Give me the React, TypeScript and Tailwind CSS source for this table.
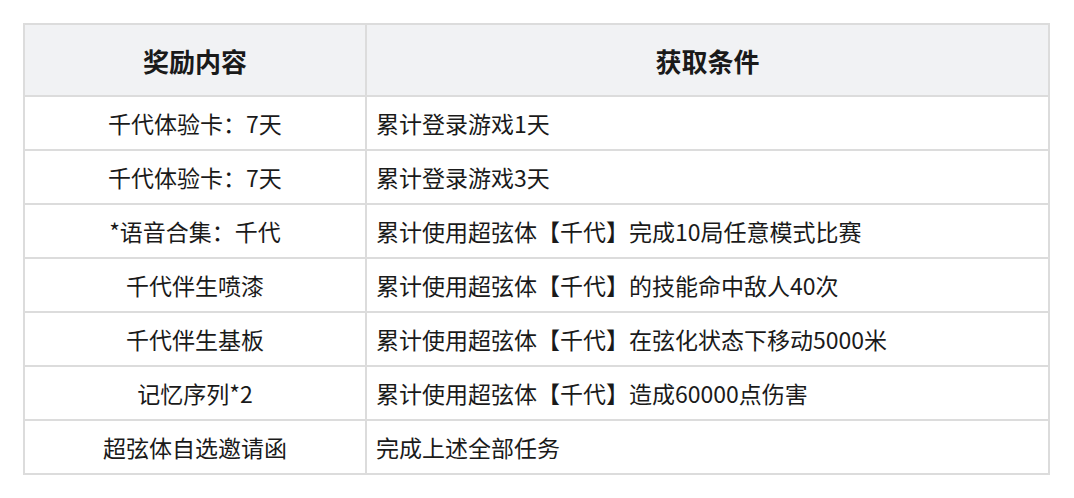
export default function App() {
  const rows: [string, string][] = [
    ["千代体验卡：7天", "累计登录游戏1天"],
    ["千代体验卡：7天", "累计登录游戏3天"],
    ["*语音合集：千代", "累计使用超弦体【千代】完成10局任意模式比赛"],
    ["千代伴生喷漆", "累计使用超弦体【千代】的技能命中敌人40次"],
    ["千代伴生基板", "累计使用超弦体【千代】在弦化状态下移动5000米"],
    ["记忆序列*2", "累计使用超弦体【千代】造成60000点伤害"],
    ["超弦体自选邀请函", "完成上述全部任务"],
  ];
  return (
    <div
      className="w-[1074px] h-[498px] bg-white pt-[23px] pl-[23px] text-[#1a1a1a]"
      style={{ fontFamily: '"Noto Sans CJK SC", "Noto Sans", sans-serif' }}
    >
      <table className="w-[1027px] border-collapse">
        <thead>
          <tr className="bg-[#f1f2f4]">
            <th className="w-[342px] h-[72px] border-2 border-[#dcdcdc] text-[26px] font-bold text-center">
              奖励内容
            </th>
            <th className="h-[72px] border-2 border-[#dcdcdc] text-[26px] font-bold text-center">
              获取条件
            </th>
          </tr>
        </thead>
        <tbody>
          {rows.map(([a, b], i) => (
            <tr key={i}>
              <td className="h-[54px] border-2 border-[#dcdcdc] text-[23px] leading-none text-center">
                {a}
              </td>
              <td className="h-[54px] border-2 border-[#dcdcdc] text-[23px] leading-none pl-[9px]">
                {b}
              </td>
            </tr>
          ))}
        </tbody>
      </table>
    </div>
  );
}
